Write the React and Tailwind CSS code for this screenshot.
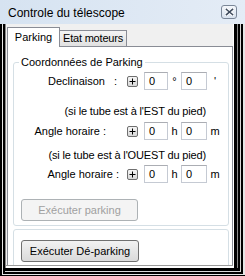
export default function App() {
  return (
    <div className="w-[245px] h-[276px] flex flex-col overflow-hidden bg-[#dbe5f2] font-['Liberation_Sans',Arial,sans-serif] text-[11px] text-black">
      <div className="h-[24px] shrink-0 flex items-center pl-[8px] pr-[8px] bg-gradient-to-r from-[#d6e3f1] to-[#e4ecf6]">
        <span className="text-[12px] leading-[14px] pt-[2px]">Controle du télescope</span>
        <button className="ml-auto w-[16px] h-[14px] rounded-[3px] border border-[#7a8697] bg-gradient-to-b from-[#f4f7fb] to-[#d9e2ee] flex items-center justify-center">
          <svg width="9" height="8" viewBox="0 0 9 8">
            <path d="M1.5 1.5 L7.5 6.5 M7.5 1.5 L1.5 6.5" stroke="#ffffff" strokeWidth="3.2" strokeLinecap="square" />
            <path d="M1.5 1.5 L7.5 6.5 M7.5 1.5 L1.5 6.5" stroke="#3e4a5c" strokeWidth="1.6" strokeLinecap="square" />
          </svg>
        </button>
      </div>

      <div className="flex-1 min-h-0 flex flex-col border-l-2 border-b border-black">
        <div className="flex-1 min-h-0 flex flex-col border-l border-r-2 border-b border-[#e6e6e6]">
          <div className="flex-1 min-h-0 flex flex-col border-l-2 border-r-2 border-b-2 border-black">
            <div className="flex-1 min-h-0 flex flex-col border-r border-b border-[#d8d8d8]">
              <div className="flex-1 min-h-0 flex flex-col border-r-2 border-b-[3px] border-black">
                <div className="flex-1 min-h-0 flex flex-col border-l border-r border-[#8a8a8a]">
                  <div className="flex-1 min-h-0 flex flex-col border-r-[3px] border-black">
                    <div className="flex-1 min-h-0 flex flex-col border-r border-b-2 border-white">
                      <div className="flex-1 min-h-0 flex flex-col border-b border-[#9a9a9a]">
                        <Client />
                      </div>
                    </div>
                  </div>
                </div>
              </div>
            </div>
          </div>
        </div>
      </div>
    </div>
  );
}

function Client() {
  return (
    <div className="flex-1 min-h-0 overflow-hidden bg-[#f0f0f0] pl-px pt-[3px]">
      <div className="flex items-end h-[19px] relative z-10">
        <div className="w-[53px] h-[20px] -mb-px border border-b-0 border-[#898c95] bg-white flex items-center justify-center">
          Parking
        </div>
        <div className="w-[67px] h-[16px] border-t border-r border-[#898c95] bg-gradient-to-b from-[#f4f4f4] to-[#e1e1e1] flex items-center justify-center tracking-[-0.2px]">
          Etat moteurs
        </div>
      </div>

      <div className="w-[226px] h-[240px] border border-[#898c95] bg-white pl-[5px]">
        <fieldset className="w-[216px] mt-[9px] border border-[#d5dfe5] rounded-[3px] pb-[4px]">
          <legend className="ml-[5px] px-[2px] leading-[13px]">Coordonnées de Parking</legend>

          <Row label={<>Declinaison<span className="ml-[9px]">:</span></>} labelPad="pr-[10px]" unit1="°" unit2="'" className="mt-[3px]" />

          <div className="mt-[15px] leading-[12px] text-right pr-[22px] tracking-[-0.15px]">
            (si le tube est à l'EST du pied)
          </div>
          <Row label="Angle horaire :" labelPad="pr-[21px]" unit1="h" unit2="m" className="mt-[5px]" />

          <div className="mt-[9px] leading-[12px] text-right pr-[22px] tracking-[-0.15px]">
            (si le tube est à l'OUEST du pied)
          </div>
          <Row label="Angle horaire :" labelPad="pr-[8px]" unit1="h" unit2="m" className="mt-[4px]" />

          <button
            disabled
            className="mt-[16px] ml-[7px] w-[117px] h-[22px] rounded-[3px] border border-[#adb2b5] bg-[#f4f4f4] text-[#a0a0a0]"
          >
            Exécuter parking
          </button>
        </fieldset>

        <div className="w-[216px] h-[60px] mt-[3px] border border-[#d5dfe5] rounded-[3px] pt-[10px] pl-[7px]">
          <button className="w-[118px] h-[22px] rounded-[3px] border border-[#707070] bg-gradient-to-b from-[#f2f2f2] to-[#dadada] text-black">
            Exécuter Dé-parking
          </button>
        </div>
      </div>
    </div>
  );
}

function Row({ label, labelPad, unit1, unit2, className }) {
  return (
    <div className={`flex items-center h-[18px] ${className}`}>
      <div className={`w-[113px] text-right whitespace-nowrap ${labelPad}`}>{label}</div>
      <button className="w-[11px] h-[11px] rounded-[2px] border border-[#707070] bg-gradient-to-b from-[#f6f6f6] to-[#d8d8d8] flex items-center justify-center">
        <svg width="7" height="7" viewBox="0 0 7 7">
          <path d="M0.5 3.5 H6.5 M3.5 0.5 V6.5" stroke="#000" strokeWidth="1" />
        </svg>
      </button>
      <div className="ml-[6px] w-[24px] h-[18px] border border-[#c5cad3] border-t-[#abadb3] bg-white pl-[4px] leading-[16px]">0</div>
      <span className="w-[13px] text-center leading-[14px]">{unit1}</span>
      <div className="w-[26px] h-[18px] border border-[#c5cad3] border-t-[#abadb3] bg-white pl-[4px] leading-[16px]">0</div>
      <span className="w-[16px] text-center leading-[14px]">{unit2}</span>
    </div>
  );
}
